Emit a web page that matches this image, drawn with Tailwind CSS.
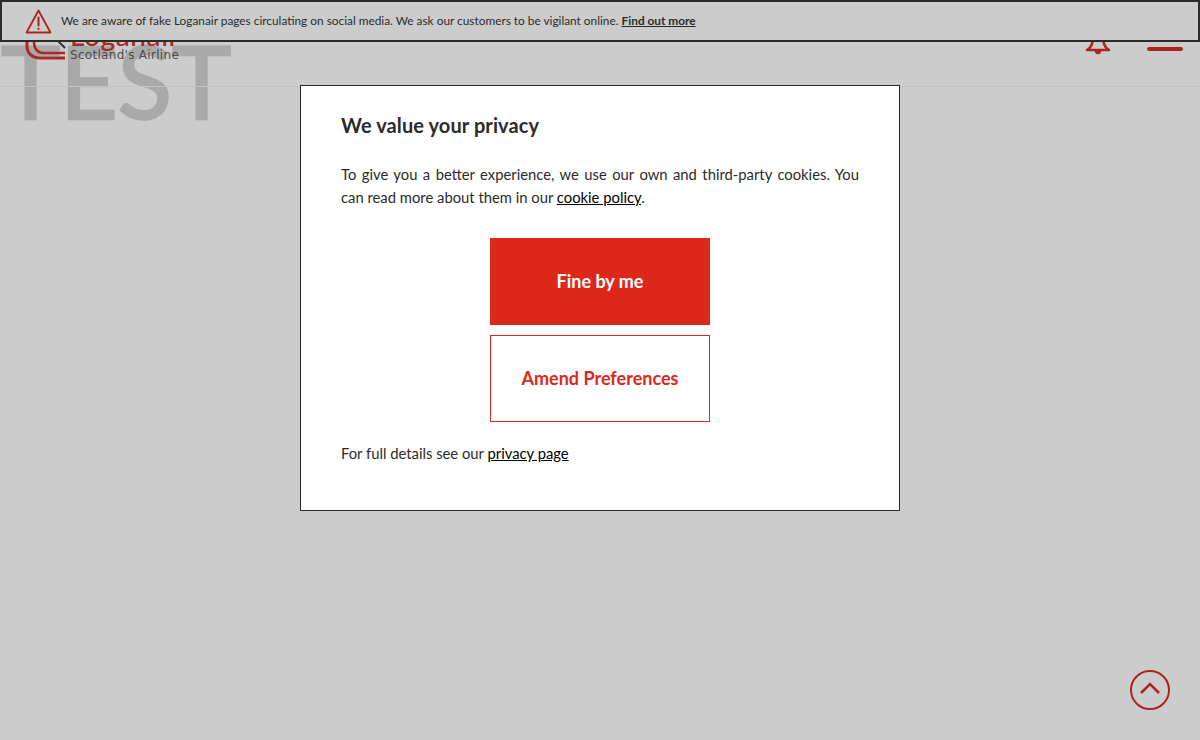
<!DOCTYPE html>
<html lang="en">
<head>
  <meta charset="UTF-8"/>
  <title>Loganair</title>
  <script src="https://cdn.jsdelivr.net/npm/@tailwindcss/browser@4"></script>
</head>
<body class="relative h-[740px] w-[1200px] overflow-hidden bg-[#cccccc] font-['Lato',sans-serif] text-[#2b2b2b]">

  <!-- TEST watermark -->
  <div class="absolute left-[1px] top-[24px] font-['Lato',sans-serif] text-[100px] font-normal leading-[112px] text-[#a9a9a9] [-webkit-text-stroke:2.5px_#a9a9a9]">TEST</div>

  <!-- Header, mostly hidden behind the notice -->
  <header class="relative flex h-[87px] items-start justify-between border-b border-[#c2c2c2] pl-[25px] pr-[17px] pt-[30px]">
    <div class="flex items-start">
      <svg class="h-[31px] w-[45px]" viewBox="0 0 45 31" fill="none">
        <path d="M40 28H15C7 28 2 23 2 16V2" stroke="#a82a24" stroke-width="3"/>
        <path d="M40 23H18C13 23 9 19 9 12V2" stroke="#a82a24" stroke-width="2.500"/>
        <path d="M32 10l8 8" stroke="#333" stroke-width="2"/>
      </svg>
      <div class="flex flex-col">
        <p class="-mt-[4px] h-[22px] text-[28px] font-medium leading-[18px] tracking-[0.6px] text-[#a82a24]">Loganair</p>
        <p class="whitespace-nowrap font-['DejaVu_Sans',sans-serif] text-[12px] leading-[14px] tracking-[0.3px] text-[#4a4a4a]">Scotland's Airline</p>
      </div>
    </div>
    <div class="flex items-start gap-[36px]">
      <svg class="h-[26px] w-[26px]" viewBox="0 0 26 26" fill="none" stroke="#a8261f" stroke-width="2.500" stroke-linejoin="round">
        <path d="M8 4c0 9-1 13-6 16h22c-5-3-6-7-6-16"/>
        <path d="M11 21c0 2.500 4 2.500 4 0" fill="#a8261f"/>
      </svg>
      <div class="mt-[17px] h-[4px] w-[36px] rounded-full bg-[#a8261f]"></div>
    </div>
  </header>

  <!-- Notice -->
  <div class="absolute inset-x-0 top-0 flex h-[42px] items-center border-2 border-[#2b2b2b] bg-[#cccccc] pl-[23px]">
    <svg class="h-[25px] w-[27px]" viewBox="0 0 27 25" fill="none" stroke="#a8261f" stroke-width="1.800" stroke-linejoin="round" stroke-linecap="round">
      <path d="M13.500 1.500 1.500 23.500h24z"/>
      <path d="M13.500 8.500v8" stroke-width="2"/>
      <path d="M13.500 19.500v.6" stroke-width="2"/>
    </svg>
    <p class="ml-[9px] text-[11.85px] text-[#2b2b2b]">We are aware of fake Loganair pages circulating on social media. We ask our customers to be vigilant online. <a class="font-bold underline">Find out more</a></p>
  </div>

  <!-- Cookie dialog -->
  <div class="absolute left-[300px] top-[85px] h-[426px] w-[600px] border border-[#2b2b2b] bg-white px-[40px] pt-[25px]">
    <h2 class="text-[20px] font-bold leading-[28px] tracking-[0.1px]">We value your privacy</h2>
    <p class="mt-[24px] text-justify text-[14.8px] leading-[23px]">To give you a better experience, we use our own and third-party cookies. You can read more about them in our <a class="text-black underline">cookie policy</a>.</p>
    <div class="mt-[29px] flex flex-col items-center gap-[10px]">
      <button class="h-[87px] w-[220px] bg-[#dc281b] text-[18px] font-bold text-white">Fine by me</button>
      <button class="h-[87px] w-[220px] border border-[#dc281b] bg-white text-[18px] font-bold text-[#dc281b]">Amend Preferences</button>
    </div>
    <p class="mt-[20px] text-[14.8px] leading-[23px]">For full details see our <a class="text-black underline">privacy page</a></p>
  </div>

  <!-- Back to top -->
  <button class="absolute left-[1130px] top-[670px] flex h-[40px] w-[40px] items-center justify-center rounded-full border-[2.5px] border-[#a8261f] pb-[4px]">
    <svg class="h-[12px] w-[20px]" viewBox="0 0 20 12" fill="none" stroke="#a8261f" stroke-width="2.500"><path d="M1 11 10 2 19 11"/></svg>
  </button>
</body>
</html>
